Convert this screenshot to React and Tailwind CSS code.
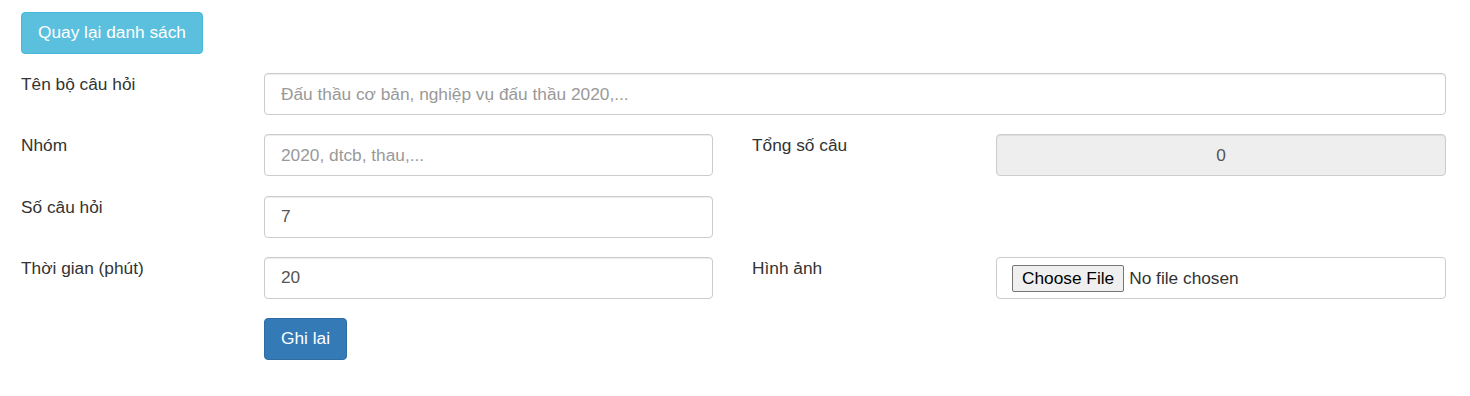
const inputCls =
  "w-full h-[42px] px-4 border border-[#ccc] rounded-[4px] text-[17.3px] text-[#555] placeholder:text-[#999] outline-none shadow-[inset_0_1px_1px_rgba(0,0,0,0.075)]";

function Label({ children, className = "" }) {
  return (
    <div className={"w-[243px] shrink-0 leading-[23px] text-[17.3px] text-[#333] " + className}>{children}</div>
  );
}

export default function App() {
  return (
    <div className="min-h-[396px] bg-white px-[21px] pt-[12px] font-['Liberation_Sans',Arial,sans-serif]">
      {/* Back */}
      <button className="h-[42px] px-4 bg-[#5bc0de] border border-[#46b8da] rounded-[4px] text-white text-[17.3px]">
        Quay lại danh sách
      </button>

      <div className="mt-[19px] flex flex-col gap-[19.25px]">
        {/* Ten bo cau hoi */}
        <div className="flex">
          <Label>Tên bộ câu hỏi</Label>
          <div className="w-[1182px] shrink-0">
            <input className={inputCls + " bg-white"} placeholder="Đấu thầu cơ bản, nghiệp vụ đấu thầu 2020,..." />
          </div>
        </div>

        {/* Nhom / Tong so cau */}
        <div className="flex">
          <Label>Nhóm</Label>
          <div className="w-[449px] shrink-0">
            <input className={inputCls + " bg-white"} placeholder="2020, dtcb, thau,..." />
          </div>
          <Label className="ml-[39px] w-[244px]">Tổng số câu</Label>
          <div className="w-[450px] shrink-0">
            <input className={inputCls + " bg-[#eee] text-center"} value="0" readOnly disabled />
          </div>
        </div>

        {/* So cau hoi */}
        <div className="flex">
          <Label>Số câu hỏi</Label>
          <div className="w-[449px] shrink-0">
            <input className={inputCls + " bg-white"} defaultValue="7" />
          </div>
        </div>

        {/* Thoi gian / Hinh anh */}
        <div className="flex">
          <Label>Thời gian (phút)</Label>
          <div className="w-[449px] shrink-0">
            <input className={inputCls + " bg-white"} defaultValue="20" />
          </div>
          <Label className="ml-[39px] w-[244px]">Hình ảnh</Label>
          <div className="w-[450px] shrink-0 h-[42px] border border-[#ccc] rounded-[4px] flex items-center pl-[15px] pt-[1px]">
            <input
              type="file"
              className="text-[17.3px] text-[#333] file:mr-[5px] file:h-[27px] file:px-[9px] file:border file:border-[#767676] file:rounded-[2px] file:bg-[#efefef] file:text-[17.3px] file:text-black"
            />
          </div>
        </div>

        {/* Submit */}
        <div className="flex">
          <div className="w-[243px] shrink-0" />
          <button className="h-[42px] px-4 bg-[#337ab7] border border-[#2e6da4] rounded-[4px] text-white text-[17.3px]">
            Ghi lai
          </button>
        </div>
      </div>
    </div>
  );
}
